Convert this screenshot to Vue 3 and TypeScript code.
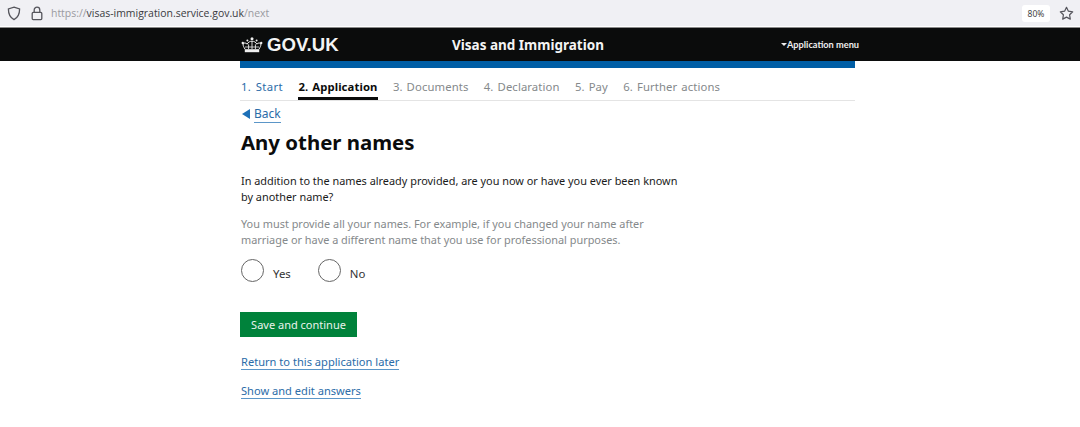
<script setup lang="ts">
const steps = [
  { label: '1. Start', state: 'done' },
  { label: '2. Application', state: 'current' },
  { label: '3. Documents', state: 'todo' },
  { label: '4. Declaration', state: 'todo' },
  { label: '5. Pay', state: 'todo' },
  { label: '6. Further actions', state: 'todo' },
]
</script>

<template>
  <div class="page">
    <div class="browser">
      <svg class="ico shield" width="14" height="15" viewBox="0 0 14 15" fill="none" stroke="#55555c" stroke-width="1.3"><path d="M7 1.2 12.6 3c0 5-1.6 8.6-5.6 10.6C3 11.6 1.4 8 1.4 3Z" /></svg>
      <svg class="ico lock" width="12" height="15" viewBox="0 0 12 15" fill="none" stroke="#55555c" stroke-width="1.3"><rect x="1.2" y="6.4" width="9.6" height="7.2" rx="1" /><path d="M3.2 6.4V4a2.8 2.8 0 0 1 5.6 0v2.4" /></svg>
      <div class="url"><span class="dim">https://</span>visas-immigration.service.gov.uk<span class="dim">/next</span></div>
      <div class="zoom">80%</div>
      <svg class="star" width="15" height="15" viewBox="0 0 15 15" fill="none" stroke="#55555c" stroke-width="1.2"><path d="M7.5 1.3 9.4 5.2l4.3.6-3.1 3 .7 4.3-3.8-2-3.8 2 .7-4.3-3.1-3 4.3-.6Z" stroke-linejoin="round" /></svg>
    </div>
    <header class="masthead">
      <div class="mast-inner">
        <div class="logo">
          <svg width="22" height="16" viewBox="0 0 22 16" fill="none" stroke="#efefef" stroke-width="1"><path d="M4 12.2C2.8 10 1.8 8.6 2.2 7c.5-1.5 2.8-1.4 4 .2.6-2 3-3 4.8-3s4.2 1 4.8 3c1.2-1.6 3.5-1.7 4-.2.4 1.6-.6 3-1.8 5.2" /><path d="M7.6 12V7.4M11 12V4.2M14.4 12V7.4" stroke-width=".9" /><path d="M4 10h14" stroke-width=".8" /><rect x="3.8" y="12.2" width="14.4" height="3" fill="#efefef" stroke="none" /><g fill="#efefef" stroke="none"><circle cx="11" cy="1.8" r="1.5" /><circle cx="6.4" cy="3.4" r="1" /><circle cx="15.6" cy="3.4" r="1" /><circle cx="1.8" cy="6" r="1.2" /><circle cx="20.2" cy="6" r="1.2" /></g></svg>
          <span>GOV.UK</span>
        </div>
        <div class="service">Visas and Immigration</div>
        <div class="menu"><i class="caret"></i>Application menu</div>
      </div>
    </header>
    <main class="content">
      <div class="bluebar"></div>
      <nav class="steps">
        <span v-for="s in steps" :key="s.label" class="step" :class="s.state">{{ s.label }}</span>
      </nav>
      <a class="back"><i class="back-arrow"></i><span>Back</span></a>
      <h1>Any other names</h1>
      <p class="question">In addition to the names already provided, are you now or have you ever been known<br>by another name?</p>
      <p class="hint">You must provide all your names. For example, if you changed your name after<br>marriage or have a different name that you use for professional purposes.</p>
      <div class="radios">
        <label class="radio"><i class="circle"></i><span>Yes</span></label>
        <label class="radio"><i class="circle"></i><span>No</span></label>
      </div>
      <button class="save">Save and continue</button>
      <a class="link first">Return to this application later</a>
      <a class="link second">Show and edit answers</a>
    </main>
  </div>
</template>

<style>
html, body { margin: 0; background: #fff; }
</style>

<style scoped>
.page { width: 1080px; height: 427px; overflow: hidden; font-family: "Noto Sans", "Open Sans", sans-serif; background: #fff; }
.browser { height: 26px; background: #f0f0f4; display: flex; align-items: center; padding: 0 6px 0 7px; box-sizing: border-box; margin-bottom: 1px; }
.ico { flex: none; }
.lock { margin-left: 10px; }
.url { margin-left: 8px; font-size: 10.45px; color: #3a3a40; flex: 1; font-family: "Open Sans", sans-serif; }
.dim { color: #9a9aa0; }
.zoom { background: #fff; border-radius: 3px; font-size: 8.5px; color: #444; width: 28px; height: 17px; line-height: 17px; text-align: center; margin-right: 9px; }
.masthead { height: 34px; background: #0b0c0c; border-top: 1px solid #8a8a8a; box-sizing: border-box; }
.mast-inner { width: 618px; margin-left: 241px; display: flex; align-items: center; height: 100%; position: relative; }
.logo { display: flex; align-items: center; gap: 4px; color: #f4f4f4; font-family: "Liberation Sans", sans-serif; font-weight: 700; font-size: 18.6px; width: 211px; }
.service { color: #f4f4f4; font-weight: 700; font-size: 13.5px; font-family: "Noto Sans", sans-serif; width: 329px; }
.menu { color: #eee; font-family: Lato, sans-serif; font-weight: 700; font-size: 9.2px; display: flex; align-items: center; gap: 0; white-space: nowrap; }
.caret { display: block; width: 0; height: 0; border-left: 3px solid transparent; border-right: 3px solid transparent; border-top: 3px solid #eee; }
.content { width: 615px; margin-left: 240px; }
.bluebar { height: 7px; background: #005ea5; }
.steps { display: flex; gap: 15.4px; height: 33px; border-bottom: 1px solid #e4e4e4; box-sizing: border-box; padding-left: 1px; font-size: 11.3px; letter-spacing: 0.1px; word-spacing: 1px; }
.step { padding-top: 11px; height: 32px; box-sizing: border-box; white-space: nowrap; }
.done { color: #2b6ca8; letter-spacing: 0.4px; }
.current { color: #0b0c0c; font-weight: 700; border-bottom: 3px solid #0b0c0c; }
.todo { color: #85898b; }
.back { display: flex; align-items: center; gap: 4px; margin: 4px 0 0 2px; font-size: 12px; color: #2b6ca8; height: 17px; }
.back span { border-bottom: 1px solid #5b96c8; }
.back-arrow { display: block; width: 0; height: 0; border-top: 5px solid transparent; border-bottom: 5px solid transparent; border-right: 8px solid #1d70b8; }
h1 { margin: 6px 0 0 1px; font-size: 20.4px; line-height: 28px; font-weight: 700; color: #0b0c0c; }
.question { margin: 17px 0 0 1px; font-size: 10.9px; line-height: 16px; color: #1a1a1a; }
.hint { margin: 11px 0 0 1px; font-size: 10.9px; line-height: 16px; color: #85898b; }
.radios { display: flex; margin: 11px 0 0 1px; gap: 27px; }
.radio { display: flex; align-items: center; gap: 9px; font-size: 11.4px; color: #333; }
.radio span { padding-top: 5px; }
.circle { display: block; width: 21px; height: 21px; border: 1.5px solid #666; border-radius: 50%; }
.save { display: block; margin: 30px 0 0 0; width: 117px; height: 25px; padding: 0; border: 0; background: #00823b; color: #eaf3ec; font-family: inherit; font-size: 11px; }
.link { display: table; font-size: 11.1px; color: #2b6ca8; border-bottom: 1px solid #5b96c8; margin-left: 1px; line-height: 14px; }
.first { margin-top: 18px; }
.second { margin-top: 14px; }
</style>
